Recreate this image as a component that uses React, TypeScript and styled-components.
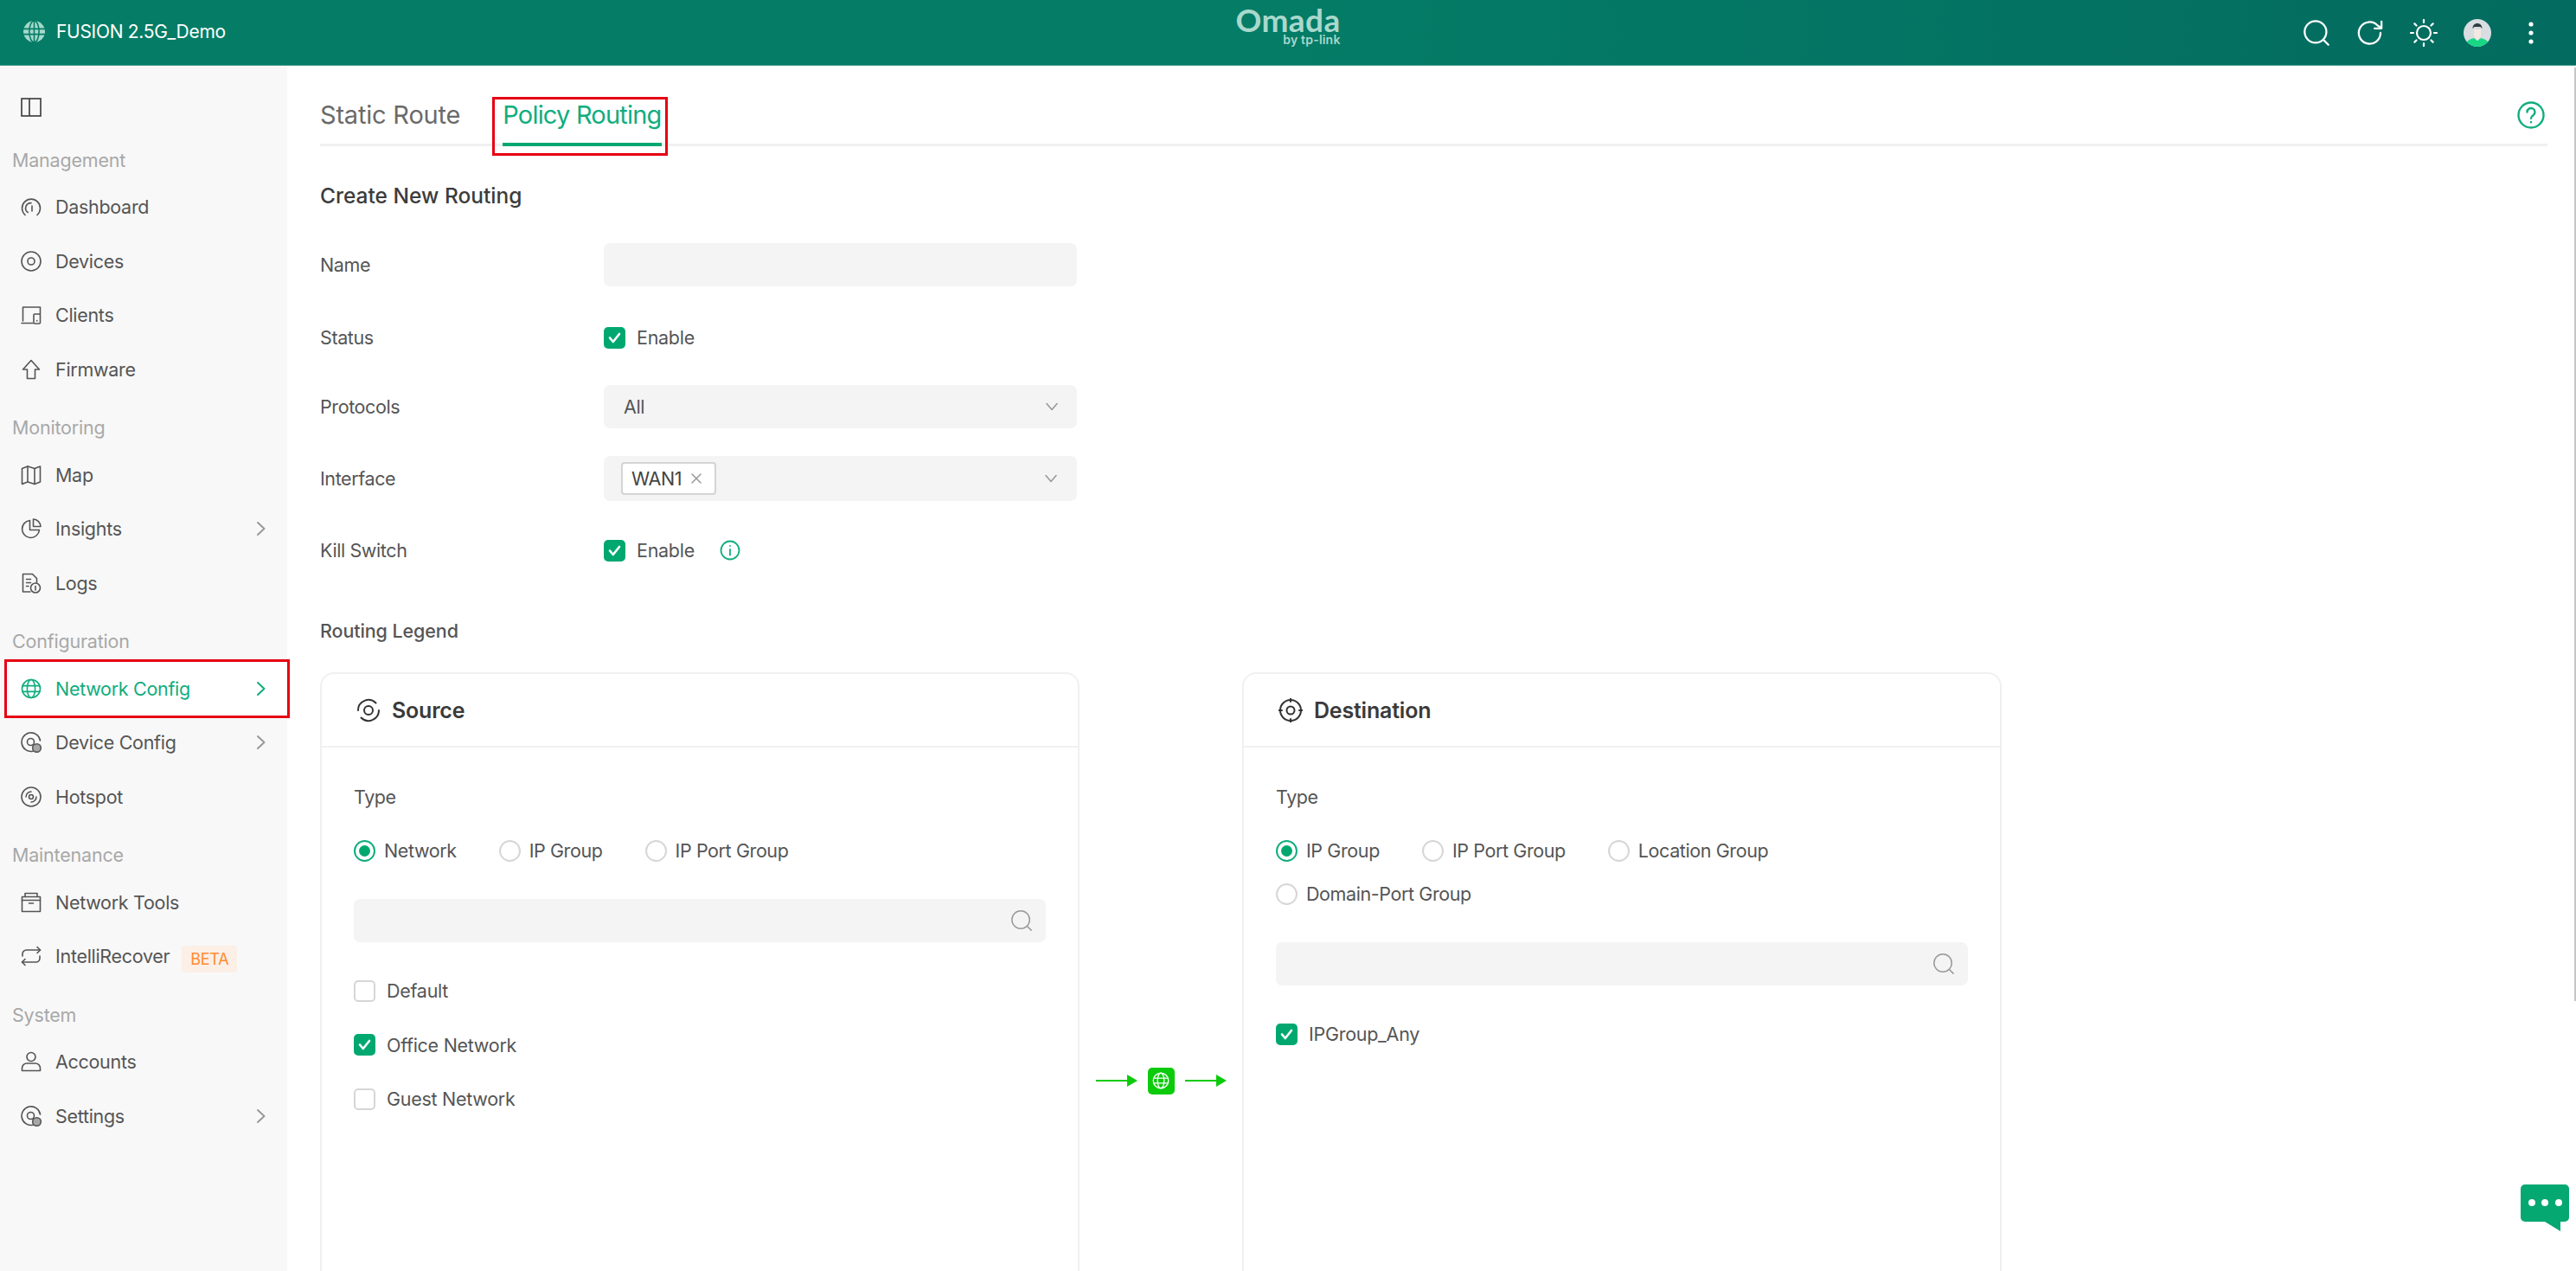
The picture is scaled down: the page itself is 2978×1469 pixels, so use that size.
import React from "react";
import styled, { createGlobalStyle } from "styled-components";

const GlobalStyle = createGlobalStyle`
  html, body {
    margin: 0;
    padding: 0;
    height: 100%;
    overflow: hidden;
    background: #fff;
  }
  body {
    font-family: Inter, "Noto Sans", "Liberation Sans", sans-serif;
    color: #555;
  }
  * { box-sizing: border-box; }
`;

const GREEN = "#00a870";

// Page frame
const Page = styled.div`
  position: relative;
  width: 100%;
  height: 100vh;
  display: flex;
  flex-direction: column;
  overflow: hidden;
`;

const Header = styled.header`
  flex: 0 0 76px;
  display: grid;
  grid-template-columns: 1fr auto 1fr;
  align-items: center;
  background: linear-gradient(90deg, #057d66 0%, #047c66 50%, #036b5f 100%);
  border-bottom: 1px solid #3e9a88;
  color: #fff;
`;

const Brand = styled.div`
  display: flex;
  align-items: center;
  gap: 13px;
  padding: 0 0 2px 27px;
  font-size: 21px;
  letter-spacing: -0.3px;
`;

const Logo = styled.div`
  display: flex;
  flex-direction: column;
  align-items: flex-end;
  color: #a9d8cc;
  margin-top: -17px;
`;

const LogoWord = styled.span`
  font-family: Lato, Inter, sans-serif;
  font-size: 37px;
  line-height: 34px;
  font-weight: 700;
  letter-spacing: 0.4px;
`;

const LogoBy = styled.span`
  font-size: 14px;
  line-height: 12px;
  font-weight: 600;
  letter-spacing: 0.2px;
`;

const HeaderTools = styled.div`
  display: flex;
  align-items: center;
  justify-content: flex-end;
  gap: 30px;
  padding-right: 36px;
`;

const DotsBox = styled.span`
  width: 32px;
  display: flex;
  justify-content: center;
`;

const Body = styled.div`
  flex: 1;
  display: flex;
  min-height: 0;
`;

// Sidebar
const Sidebar = styled.aside`
  flex: 0 0 332px;
  background: #f8f8f8;
  padding-top: 24px;
`;

const ToggleRow = styled.div`
  height: 48.5px;
  padding: 0 0 1.5px 24px;
  display: flex;
  align-items: center;
  color: #444;
`;

const SectionLabel = styled.div`
  height: 59.5px;
  padding: 24px 0 0 14px;
  font-size: 21.5px;
  line-height: 24px;
  letter-spacing: -0.2px;
  color: #a8a8a8;
`;

const NavRow = styled.div<{ $active?: boolean }>`
  height: 62.5px;
  margin-left: 8px;
  padding: 0 22px 0 16px;
  display: flex;
  align-items: center;
  gap: 16px;
  font-size: 21.5px;
  letter-spacing: -0.3px;
  color: ${(p) => (p.$active ? "#10ad7e" : "#555")};
  background: ${(p) => (p.$active ? "#fff" : "transparent")};
  outline: ${(p) => (p.$active ? "3px solid #e60012" : "none")};
  position: relative;
`;

const NavText = styled.span`
  flex: 0 0 auto;
`;

const NavChevron = styled.span<{ $active?: boolean }>`
  margin-left: auto;
  display: flex;
  color: ${(p) => (p.$active ? "#10ad7e" : "#999")};
`;

const BetaBadge = styled.span`
  margin: 6px 0 0 -2px;
  padding: 0 10px;
  height: 31px;
  line-height: 32px;
  font-size: 18px;
  color: #ff8b33;
  background: #fbefe6;
  border-radius: 4px;
`;

// Main column
const Main = styled.main`
  flex: 1;
  min-width: 0;
  padding: 0 33px 0 38px;
  background: #fff;
`;

const TabBar = styled.div`
  height: 93px;
  display: flex;
  align-items: flex-end;
  border-bottom: 3px solid #f0f0f0;
  position: relative;
`;

const Tab = styled.div<{ $active?: boolean }>`
  position: relative;
  height: 72px;
  line-height: 72px;
  margin-right: 49px;
  font-size: 29px;
  letter-spacing: ${(p) => (p.$active ? "-0.8px" : "-0.2px")};
  color: ${(p) => (p.$active ? "#10ad7e" : "#6a6a6a")};
  border-bottom: 4px solid ${(p) => (p.$active ? GREEN : "transparent")};
  margin-bottom: -3px;
  &::after {
    content: ${(p) => (p.$active ? '""' : "none")};
    position: absolute;
    left: -12px;
    right: -7px;
    top: 15px;
    bottom: -15px;
    border: 3px solid #e60012;
    pointer-events: none;
  }
`;

const HelpButton = styled.span`
  position: absolute;
  right: 3px;
  top: 41px;
  display: flex;
  color: #10ad7e;
`;

const Heading = styled.h2`
  margin: 41px 0 39px;
  font-size: 24.5px;
  line-height: 32px;
  font-weight: 500;
  letter-spacing: 0;
  color: #3c3c3c;
`;

const Form = styled.div`
  display: flex;
  flex-direction: column;
  gap: 32px;
`;

const FormRow = styled.div<{ $tall?: boolean; $drop?: boolean }>`
  display: grid;
  grid-template-columns: 328px 547px;
  align-items: center;
  min-height: ${(p) => (p.$tall ? "52px" : "50px")};
  margin: ${(p) => (p.$drop ? "2px 0 -2px" : "0")};
`;

const Label = styled.label`
  font-size: 21.5px;
  letter-spacing: -0.4px;
  color: #555;
`;

const Field = styled.div<{ $pad?: string }>`
  height: 100%;
  display: flex;
  align-items: center;
  justify-content: space-between;
  background: #f4f4f4;
  border-radius: 7px;
  padding: ${(p) => p.$pad || "0 20px 0 23px"};
  font-size: 21.5px;
  letter-spacing: -0.4px;
  color: #555;
`;

const Tag = styled.span`
  height: 38px;
  width: 110px;
  display: flex;
  align-items: center;
  justify-content: space-between;
  padding: 0 14px 0 10px;
  background: #fff;
  border: 2px solid #d4d4d4;
  border-radius: 4px;
  color: #444;
`;

const FieldChevron = styled.span`
  display: flex;
  color: #999;
`;

const CheckLine = styled.div`
  display: flex;
  align-items: center;
  gap: 13px;
  font-size: 21.5px;
  letter-spacing: -0.28px;
  color: #555;
`;

const CheckBox = styled.span<{ $checked?: boolean }>`
  flex: 0 0 25px;
  width: 25px;
  height: 25px;
  display: flex;
  align-items: center;
  justify-content: center;
  border-radius: 5px;
  background: ${(p) => (p.$checked ? GREEN : "#fff")};
  border: ${(p) => (p.$checked ? "none" : "2px solid #d6d6d6")};
`;

const InfoIcon = styled.span`
  display: flex;
  margin-left: 16px;
  color: #10ad7e;
`;

const SubHeading = styled.div`
  margin: 53px 0 33px;
  font-size: 21.5px;
  line-height: 30px;
  font-weight: 500;
  letter-spacing: -0.1px;
  color: #555;
`;

// Legend cards
const Legend = styled.div`
  display: flex;
  align-items: center;
`;

const Card = styled.section`
  flex: 0 0 878px;
  height: 944px;
  border: 2px solid #f0f0f0;
  border-radius: 16px;
`;

const CardHead = styled.div`
  height: 85px;
  display: flex;
  align-items: center;
  gap: 13px;
  padding-left: 40px;
  border-bottom: 2px solid #f0f0f0;
  font-size: 25px;
  font-weight: 600;
  letter-spacing: -0.2px;
  color: #3a3a3a;
`;

const CardBody = styled.div`
  padding: 42px 37px 0 37px;
`;

const TypeLabel = styled.div`
  font-size: 21.5px;
  line-height: 30px;
  letter-spacing: -0.4px;
  color: #555;
  margin-bottom: 22px;
`;

const RadioGroup = styled.div`
  display: flex;
  flex-wrap: wrap;
  column-gap: 49px;
  margin-bottom: 31px;
`;

const RadioItem = styled.div`
  height: 50px;
  display: flex;
  align-items: center;
  gap: 10px;
  font-size: 21.5px;
  letter-spacing: -0.4px;
  color: #555;
`;

const RadioDot = styled.span<{ $on?: boolean }>`
  width: 25px;
  height: 25px;
  border-radius: 50%;
  background: #fff;
  border: 2px solid ${(p) => (p.$on ? "#10ad7e" : "#d6d6d6")};
  display: flex;
  align-items: center;
  justify-content: center;
  &::after {
    content: ${(p) => (p.$on ? '""' : "none")};
    width: 13px;
    height: 13px;
    border-radius: 50%;
    background: ${GREEN};
  }
`;

const SearchField = styled.div`
  height: 50px;
  display: flex;
  align-items: center;
  justify-content: flex-end;
  padding-right: 15px;
  background: #f4f4f4;
  border-radius: 7px;
  color: #999;
  margin-bottom: 25px;
`;

const CheckRow = styled(CheckLine)`
  height: 62.5px;
`;

const Connector = styled.div`
  flex: 0 0 188px;
  display: flex;
  align-items: center;
  justify-content: center;
  gap: 12px;
`;

const GlobeBadge = styled.span`
  width: 31px;
  height: 31px;
  display: flex;
  align-items: center;
  justify-content: center;
  background: #0ccb0c;
  border-radius: 5px;
  color: #fff;
`;

// Floating bits
const ChatButton = styled.div`
  position: absolute;
  right: 8px;
  bottom: 46px;
  display: flex;
`;

const ScrollThumb = styled.div`
  position: absolute;
  right: 0;
  top: 78px;
  width: 2px;
  height: 1079px;
  background: #c6c6c6;
`;

type IconProps = { size?: number };

const Svg = ({ size = 24, children }: IconProps & { children: React.ReactNode }) => (
  <svg
    width={size}
    height={size}
    viewBox="0 0 24 24"
    fill="none"
    stroke="currentColor"
    strokeWidth={1.6}
    strokeLinecap="round"
    strokeLinejoin="round"
    style={{ flex: "0 0 auto" }}
  >
    {children}
  </svg>
);

const GlobeIcon = ({ size }: IconProps) => (
  <Svg size={size}>
    <circle cx="12" cy="12" r="10.5" />
    <ellipse cx="12" cy="12" rx="4.6" ry="10.5" />
    <path d="M1.8 8.6h20.4M1.8 15.4h20.4" />
  </Svg>
);

const BrandGlobe = () => (
  <svg width="25" height="25" viewBox="0 0 24 24" style={{ flex: "0 0 auto" }}>
    <circle cx="12" cy="12" r="12" fill="#a5d8cb" />
    <g fill="none" stroke="#057d66" strokeWidth="1.5">
      <ellipse cx="12" cy="12" rx="5.4" ry="12" />
      <path d="M12 0v24M0 9h24M0 15h24" />
    </g>
  </svg>
);

const Chevron = () => (
  <svg width="16" height="24" viewBox="0 0 16 24" fill="none" stroke="currentColor" strokeWidth="2" strokeLinecap="round" strokeLinejoin="round">
    <path d="M4 5l7.5 7L4 19" />
  </svg>
);

const ChevronDown = () => (
  <svg width="18" height="18" viewBox="0 0 18 18" fill="none" stroke="currentColor" strokeWidth="1.6" strokeLinecap="round" strokeLinejoin="round">
    <path d="M3 5.5l6 7 6-7" />
  </svg>
);

const Check = () => (
  <svg width="19" height="19" viewBox="0 0 19 19" fill="none" stroke="#fff" strokeWidth="2.6" strokeLinecap="round" strokeLinejoin="round">
    <path d="M4 9.5l3.8 4.5L15 5" />
  </svg>
);

const SearchIcon = ({ size = 28, weight = 1.6 }: IconProps & { weight?: number }) => (
  <svg width={size} height={size} viewBox="0 0 28 28" fill="none" stroke="currentColor" strokeWidth={weight} strokeLinecap="round">
    <circle cx="13" cy="13" r="11" />
    <path d="M21 21l5 5" />
  </svg>
);

const navIcons: Record<string, React.ReactNode> = {
  dashboard: (
    <Svg>
      <path d="M5 21.5A10.5 10.5 0 1 1 19 21.5" />
      <path d="M8.2 18.5A6 6 0 0 1 12 7.6" />
      <path d="M13 11v6" />
    </Svg>
  ),
  devices: (
    <Svg>
      <circle cx="12" cy="12" r="11" />
      <circle cx="12" cy="12" r="4" />
    </Svg>
  ),
  clients: (
    <Svg>
      <path d="M2.5 19V3h20v8" />
      <path d="M1 21.5h13" />
      <rect x="15" y="11" width="7.5" height="11" rx="1" />
      <path d="M18.7 18.5v.5" />
    </Svg>
  ),
  firmware: (
    <Svg>
      <path d="M12 1.5L2.5 12H7.5v10.5h9V12h5z" />
    </Svg>
  ),
  map: (
    <Svg>
      <path d="M1.5 4.5L8 2l8 2.5L22.5 2v18L16 22.5 8 20l-6.5 2.5z" />
      <path d="M8 2v18M16 4.500v18" />
    </Svg>
  ),
  insights: (
    <Svg>
      <path d="M10.5 2.5a10 10 0 1 0 11 11H10.500z" />
      <path d="M14.500 1v8.500H23A9 9 0 0 0 14.500 1z" />
    </Svg>
  ),
  logs: (
    <Svg>
      <path d="M11 22H2.500V1.500h11l5 5v5" />
      <path d="M6.500 7.500h5M6.500 11.500h5M6.500 15.500h2.500" />
      <circle cx="17" cy="17.500" r="5.500" />
      <path d="M17 15.500v4.500" />
    </Svg>
  ),
  network: <GlobeIcon />,
  deviceConfig: (
    <Svg>
      <path d="M14 22.300A10.800 10.800 0 1 1 22.500 10" />
      <circle cx="11.500" cy="11.500" r="4" />
      <circle cx="18.500" cy="18.500" r="4.800" fill="currentColor" fillOpacity=".5" />
    </Svg>
  ),
  hotspot: (
    <Svg>
      <circle cx="12" cy="12" r="11" />
      <path d="M6 12a6 6 0 0 1 6-6M18 12a6 6 0 0 1-6 6" />
      <circle cx="12" cy="12" r="2.500" />
    </Svg>
  ),
  tools: (
    <Svg>
      <rect x="1.500" y="5.500" width="21" height="17" />
      <path d="M5 5.500V1.500h14v4" />
      <path d="M1.500 9.500h21M9.500 13h5" />
    </Svg>
  ),
  recover: (
    <Svg>
      <path d="M19 1.500l3.500 3.500L19 8.500" />
      <path d="M2 12V9.500A4.500 4.500 0 0 1 6.500 5h16" />
      <path d="M5 22.500L1.500 19 5 15.500" />
      <path d="M22 12v2.500a4.500 4.500 0 0 1-4.500 4.500h-16" />
    </Svg>
  ),
  accounts: (
    <Svg>
      <circle cx="12" cy="6.500" r="5" />
      <path d="M1.500 22.500v-3a5.500 5.500 0 0 1 5.500-5.500h10a5.500 5.500 0 0 1 5.500 5.500v3z" />
    </Svg>
  ),
};
navIcons.settings = navIcons.deviceConfig;

type NavItem = { label: string; icon: string; arrow?: boolean; active?: boolean; badge?: string };

const sections: { title: string; items: NavItem[] }[] = [
  {
    title: "Management",
    items: [
      { label: "Dashboard", icon: "dashboard" },
      { label: "Devices", icon: "devices" },
      { label: "Clients", icon: "clients" },
      { label: "Firmware", icon: "firmware" },
    ],
  },
  {
    title: "Monitoring",
    items: [
      { label: "Map", icon: "map" },
      { label: "Insights", icon: "insights", arrow: true },
      { label: "Logs", icon: "logs" },
    ],
  },
  {
    title: "Configuration",
    items: [
      { label: "Network Config", icon: "network", arrow: true, active: true },
      { label: "Device Config", icon: "deviceConfig", arrow: true },
      { label: "Hotspot", icon: "hotspot" },
    ],
  },
  {
    title: "Maintenance",
    items: [
      { label: "Network Tools", icon: "tools" },
      { label: "IntelliRecover", icon: "recover", badge: "BETA" },
    ],
  },
  {
    title: "System",
    items: [
      { label: "Accounts", icon: "accounts" },
      { label: "Settings", icon: "settings", arrow: true },
    ],
  },
];

const Radio = ({ label, on }: { label: string; on?: boolean }) => (
  <RadioItem>
    <RadioDot $on={on} />
    {label}
  </RadioItem>
);

const Option = ({ label, on }: { label: string; on?: boolean }) => (
  <CheckRow>
    <CheckBox $checked={on}>{on && <Check />}</CheckBox>
    {label}
  </CheckRow>
);

const Arrow = () => (
  <svg width="48" height="16" viewBox="0 0 48 16" fill="#0ccb0c">
    <path d="M0 7h38v2H0z" />
    <path d="M36 1l12 7-12 7z" />
  </svg>
);

const App = () => {
  return (
    <Page>
      <GlobalStyle />
      <Header>
        <Brand>
          <BrandGlobe />
          FUSION 2.5G_Demo
        </Brand>
        <Logo>
          <LogoWord>Omada</LogoWord>
          <LogoBy>by tp-link</LogoBy>
        </Logo>
        <HeaderTools>
          <SearchIcon size={32} weight={2} />
          <svg width="32" height="32" viewBox="0 0 28 28" fill="none" stroke="#fff" strokeWidth="2" strokeLinecap="round" strokeLinejoin="round">
            <path d="M24.500 14A11 11 0 1 1 21.500 6.500L25 9" />
            <path d="M25.500 2.500V9.500H18.500" />
          </svg>
          <svg width="32" height="32" viewBox="0 0 32 32" fill="none" stroke="#fff" strokeWidth="2.200" strokeLinecap="round">
            <circle cx="16" cy="16" r="8" />
            <path d="M16 1v3M16 28v3M1 16h3M28 16h3M5.400 5.400l2.100 2.100M24.500 24.500l2.100 2.100M26.600 5.400l-2.100 2.100M7.500 24.500l-2.100 2.100" />
          </svg>
          <svg width="32" height="32" viewBox="0 0 32 32">
            <clipPath id="avatar-clip">
              <circle cx="16" cy="16" r="16" />
            </clipPath>
            <g clipPath="url(#avatar-clip)">
              <rect width="32" height="32" fill="#d7dde1" />
              <path d="M2 32c0-7 6-9 10-10l4 3 4-3c4 1 10 3 10 10z" fill="#17d784" />
              <path d="M12 12h8v8l-4 5-4-5z" fill="#f3e9e2" />
              <path d="M10.500 11c0-8 11-8 11 0l-2-2h-7z" fill="#2f3b41" />
            </g>
          </svg>
          <DotsBox>
            <svg width="6" height="32" viewBox="0 0 6 32" fill="#fff">
              <circle cx="3" cy="6" r="2.600" />
              <circle cx="3" cy="16" r="2.600" />
              <circle cx="3" cy="26" r="2.600" />
            </svg>
          </DotsBox>
        </HeaderTools>
      </Header>
      <Body>
        <Sidebar>
          <ToggleRow>
            <svg width="24" height="24" viewBox="0 0 24 24" fill="none" stroke="currentColor" strokeWidth="1.700">
              <rect x="1" y="2" width="22" height="20" />
              <path d="M10 2v20" />
            </svg>
          </ToggleRow>
          {sections.map((section) => (
            <React.Fragment key={section.title}>
              <SectionLabel>{section.title}</SectionLabel>
              {section.items.map((item) => (
                <NavRow key={item.label} $active={item.active}>
                  {navIcons[item.icon]}
                  <NavText>{item.label}</NavText>
                  {item.badge && <BetaBadge>{item.badge}</BetaBadge>}
                  {item.arrow && (
                    <NavChevron $active={item.active}>
                      <Chevron />
                    </NavChevron>
                  )}
                </NavRow>
              ))}
            </React.Fragment>
          ))}
        </Sidebar>
        <Main>
          <TabBar>
            <Tab>Static Route</Tab>
            <Tab $active>Policy Routing</Tab>
            <HelpButton>
              <svg width="32" height="32" viewBox="0 0 32 32" fill="none" stroke="currentColor" strokeWidth="2.400" strokeLinecap="round">
                <circle cx="16" cy="16" r="14.500" />
                <path d="M11.500 12.500a4.500 4.500 0 1 1 7 3.700c-1.500 1-2.500 1.800-2.500 3.600" />
                <path d="M16 24v.2" />
              </svg>
            </HelpButton>
          </TabBar>
          <Heading>Create New Routing</Heading>
          <Form>
            <FormRow>
              <Label>Name</Label>
              <Field />
            </FormRow>
            <FormRow $drop>
              <Label>Status</Label>
              <CheckLine>
                <CheckBox $checked>
                  <Check />
                </CheckBox>
                Enable
              </CheckLine>
            </FormRow>
            <FormRow>
              <Label>Protocols</Label>
              <Field>
                All
                <FieldChevron>
                  <ChevronDown />
                </FieldChevron>
              </Field>
            </FormRow>
            <FormRow $tall>
              <Label>Interface</Label>
              <Field $pad="0 21px 0 20px">
                <Tag>
                  WAN1
                  <svg width="14" height="14" viewBox="0 0 14 14" fill="none" stroke="#999" strokeWidth="1.500" strokeLinecap="round">
                    <path d="M2 2l10 10M12 2L2 12" />
                  </svg>
                </Tag>
                <FieldChevron>
                  <ChevronDown />
                </FieldChevron>
              </Field>
            </FormRow>
            <FormRow>
              <Label>Kill Switch</Label>
              <CheckLine>
                <CheckBox $checked>
                  <Check />
                </CheckBox>
                Enable
                <InfoIcon>
                  <svg width="24" height="24" viewBox="0 0 24 24" fill="none" stroke="currentColor" strokeWidth="1.800" strokeLinecap="round">
                    <circle cx="12" cy="12" r="10.500" />
                    <path d="M12 11v6.500M12 6.800v.2" />
                  </svg>
                </InfoIcon>
              </CheckLine>
            </FormRow>
          </Form>
          <SubHeading>Routing Legend</SubHeading>
          <Legend>
            <Card>
              <CardHead>
                <svg width="28" height="28" viewBox="0 0 28 28" fill="none" stroke="#333" strokeWidth="2" strokeLinecap="round">
                  <path d="M2 14A12 12 0 0 1 22.500 5.500" />
                  <path d="M26 14A12 12 0 0 1 5.500 22.500" />
                  <circle cx="14" cy="14" r="5" />
                </svg>
                Source
              </CardHead>
              <CardBody>
                <TypeLabel>Type</TypeLabel>
                <RadioGroup>
                  <Radio label="Network" on />
                  <Radio label="IP Group" />
                  <Radio label="IP Port Group" />
                </RadioGroup>
                <SearchField>
                  <SearchIcon size={26} />
                </SearchField>
                <Option label="Default" />
                <Option label="Office Network" on />
                <Option label="Guest Network" />
              </CardBody>
            </Card>
            <Connector>
              <Arrow />
              <GlobeBadge>
                <GlobeIcon size={20} />
              </GlobeBadge>
              <Arrow />
            </Connector>
            <Card>
              <CardHead>
                <svg width="28" height="28" viewBox="0 0 28 28" fill="none" stroke="#333" strokeWidth="2" strokeLinecap="round">
                  <circle cx="14" cy="14" r="12" />
                  <circle cx="14" cy="14" r="4.500" />
                  <path d="M14 0v4M14 24v4M0 14h4M24 14h4" />
                </svg>
                Destination
              </CardHead>
              <CardBody>
                <TypeLabel>Type</TypeLabel>
                <RadioGroup>
                  <Radio label="IP Group" on />
                  <Radio label="IP Port Group" />
                  <Radio label="Location Group" />
                  <Radio label="Domain-Port Group" />
                </RadioGroup>
                <SearchField>
                  <SearchIcon size={26} />
                </SearchField>
                <Option label="IPGroup_Any" on />
              </CardBody>
            </Card>
          </Legend>
        </Main>
      </Body>
      <ScrollThumb />
      <ChatButton>
        <svg width="56" height="54" viewBox="0 0 56 54">
          <path d="M5 0h46a5 5 0 0 1 5 5v33a5 5 0 0 1-5 5h-5v11l-18-11H5a5 5 0 0 1-5-5V5a5 5 0 0 1 5-5z" fill="#05a870" />
          <circle cx="13" cy="21" r="4" fill="#fff" />
          <circle cx="28" cy="21" r="4" fill="#fff" />
          <circle cx="44" cy="21" r="4" fill="#fff" />
        </svg>
      </ChatButton>
    </Page>
  );
};

export default App;
